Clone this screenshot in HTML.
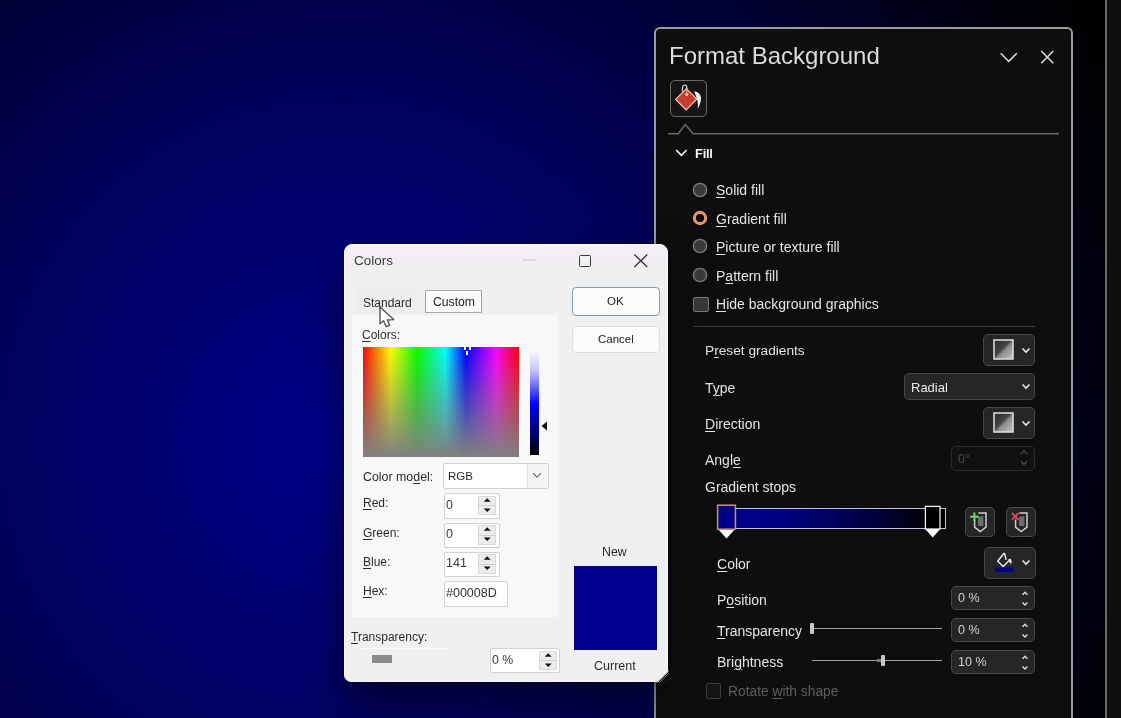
<!DOCTYPE html>
<html><head><meta charset="utf-8"><style>
html,body{margin:0;padding:0;}
body{width:1121px;height:718px;overflow:hidden;position:relative;font-family:"Liberation Sans", sans-serif;
background:#000;}
.bg{position:absolute;left:0;top:0;width:1106px;height:718px;
background:radial-gradient(circle 860px at 340px 440px,#00008d 0%,#00005c 40%,#000000 100%);}
.a{position:absolute;}
.t{position:absolute;white-space:nowrap;line-height:1;will-change:transform;}
u{text-decoration:underline;text-decoration-thickness:1px;text-underline-offset:2px;}
</style></head><body>
<div class="bg"></div>
<div class="a" style="left:1107px;top:0px;width:14px;height:718px;background:#0f0f0f"></div>
<div class="a" style="left:1105px;top:0px;width:2px;height:718px;background:#6a6a6a"></div>
<div class="a" style="left:654px;top:27px;width:419px;height:700px;background:#0e0e0e;border:2px solid #9c9c9c;border-radius:6px 6px 0 0;box-sizing:border-box"></div>
<div class="t" style="left:669px;top:43.98px;font-size:24px;color:#dcdcdc;font-weight:400;">Format Background</div>
<svg class="a" style="left:996px;top:48px;" width="26" height="18" viewBox="0 0 26 18"><path d="M4.7 5.2 L12.7 13.4 L20.8 5.2" fill="none" stroke="#e0e0e0" stroke-width="1.5"/></svg>
<svg class="a" style="left:1038px;top:48px;" width="18" height="18" viewBox="0 0 18 18"><path d="M3.3 3 L15.2 15.2 M15.2 3 L3.3 15.2" fill="none" stroke="#e0e0e0" stroke-width="1.5"/></svg>
<div class="a" style="left:670px;top:80px;width:37px;height:37px;background:#151515;border:1.5px solid #6a6a6a;border-radius:5px;box-sizing:border-box"></div>
<svg class="a" style="left:670px;top:80px;" width="37" height="37" viewBox="0 0 37 37">
<path d="M12.2 11.5 L12.6 6.4 Q13.2 5 15.2 5 Q17 5.4 17 9" fill="none" stroke="#ddd" stroke-width="1.2"/>
<path d="M16.4 8.6 L26.8 19 L16.2 30 L5.6 19.4 Z" fill="#c53d2c" stroke="#f3c7b8" stroke-width="1.2"/>
<path d="M16.8 10 L16.8 13" stroke="#ffd2b0" stroke-width="0.8"/>
<circle cx="16.8" cy="14.4" r="1.5" fill="#ffd2b0"/>
<path d="M24.2 11.2 Q30.2 12.2 31 17.5 Q31.2 23 27.6 29 Q28.4 23 27.2 19.6 Z" fill="#eee"/>
</svg>
<svg class="a" style="left:666px;top:120px;" width="395" height="16" viewBox="0 0 395 16"><path d="M2 13.8 L12.3 13.8 L19.2 4.4 L27.2 13.8 L393 13.8" fill="none" stroke="#6a6a6a" stroke-width="1.5"/></svg>
<svg class="a" style="left:672px;top:146px;" width="18" height="14" viewBox="0 0 18 14"><path d="M4.2 4.1 L9.4 9.4 L14.6 4.1" fill="none" stroke="#eee" stroke-width="1.6"/></svg>
<div class="t" style="left:695px;top:147.10px;font-size:13px;color:#f2f2f2;font-weight:700;letter-spacing:-0.3px">Fill</div>
<svg class="a" style="left:692px;top:181.8px;" width="16" height="16" viewBox="0 0 16 16"><circle cx="8" cy="8" r="6.6" fill="#3a3a3a" stroke="#7c7c7c" stroke-width="1.4"/></svg>
<svg class="a" style="left:692px;top:210px;" width="16" height="16" viewBox="0 0 16 16"><circle cx="8" cy="8" r="5.6" fill="#000" stroke="#e39572" stroke-width="3.2"/></svg>
<svg class="a" style="left:692px;top:238.2px;" width="16" height="16" viewBox="0 0 16 16"><circle cx="8" cy="8" r="6.6" fill="#3a3a3a" stroke="#7c7c7c" stroke-width="1.4"/></svg>
<svg class="a" style="left:692px;top:266.5px;" width="16" height="16" viewBox="0 0 16 16"><circle cx="8" cy="8" r="6.6" fill="#3a3a3a" stroke="#7c7c7c" stroke-width="1.4"/></svg>
<div class="t" style="left:715.5px;top:183.15px;font-size:14px;color:#e4e4e4;font-weight:400;"><u>S</u>olid fill</div>
<div class="t" style="left:715.5px;top:212.15px;font-size:14px;color:#e4e4e4;font-weight:400;"><u>G</u>radient fill</div>
<div class="t" style="left:715.5px;top:240.35px;font-size:14px;color:#e4e4e4;font-weight:400;"><u>P</u>icture or texture fill</div>
<div class="t" style="left:715.5px;top:268.85px;font-size:14px;color:#e4e4e4;font-weight:400;">P<u>a</u>ttern fill</div>
<div class="a" style="left:693px;top:296.5px;width:15.5px;height:15.5px;background:#3a3a3a;border:1.4px solid #7c7c7c;border-radius:2px;box-sizing:border-box"></div>
<div class="t" style="left:715.5px;top:297.15px;font-size:14px;color:#e4e4e4;font-weight:400;"><u>H</u>ide background graphics</div>
<div class="a" style="left:693px;top:325.5px;width:342px;height:1.2px;background:#3c3c3c"></div>
<div class="t" style="left:705px;top:344.40px;font-size:13.7px;color:#e4e4e4;font-weight:400;">P<u>r</u>eset gradients</div>
<div class="t" style="left:705px;top:381.15px;font-size:14px;color:#e4e4e4;font-weight:400;">T<u>y</u>pe</div>
<div class="t" style="left:705px;top:417.15px;font-size:14px;color:#e4e4e4;font-weight:400;"><u>D</u>irection</div>
<div class="t" style="left:705px;top:453.35px;font-size:14px;color:#e4e4e4;font-weight:400;">Angl<u>e</u></div>
<div class="t" style="left:705px;top:480.45px;font-size:14px;color:#e4e4e4;font-weight:400;">Gradient stops</div>
<div class="a" style="left:983px;top:334px;width:52px;height:32px;background:#262626;border:1px solid #474747;border-radius:5px;box-sizing:border-box;"></div>
<svg class="a" style="left:993px;top:339px;" width="21" height="21" viewBox="0 0 21 21"><defs><linearGradient id="g" x1="0" y1="0" x2="1" y2="1"><stop offset="0" stop-color="#2a2a2a"/><stop offset="0.45" stop-color="#444"/><stop offset="0.55" stop-color="#8a8a8a"/><stop offset="1" stop-color="#c8c8c8"/></linearGradient></defs>
    <rect x="1" y="1" width="19" height="19" fill="url(#g)" stroke="#d8d8d8" stroke-width="1.6"/></svg>
<svg class="a" style="left:1020.5px;top:346.5px;" width="10" height="7" viewBox="0 0 10 7"><path d="M1.5 1.5 L5 5 L8.5 1.5" fill="none" stroke="#e8e8e8" stroke-width="1.6"/></svg>
<div class="a" style="left:904px;top:373px;width:131px;height:26.5px;background:#262626;border:1px solid #474747;border-radius:5px;box-sizing:border-box;"></div>
<div class="t" style="left:911.3px;top:381.30px;font-size:13px;color:#e8e8e8;font-weight:400;">Radial</div>
<svg class="a" style="left:1021px;top:382.5px;" width="10" height="7" viewBox="0 0 10 7"><path d="M1.5 1.5 L5 5 L8.5 1.5" fill="none" stroke="#e8e8e8" stroke-width="1.6"/></svg>
<div class="a" style="left:983px;top:407px;width:52px;height:32px;background:#262626;border:1px solid #474747;border-radius:5px;box-sizing:border-box;"></div>
<svg class="a" style="left:993px;top:412px;" width="21" height="21" viewBox="0 0 21 21"><defs><linearGradient id="g" x1="0" y1="0" x2="1" y2="1"><stop offset="0" stop-color="#2a2a2a"/><stop offset="0.45" stop-color="#444"/><stop offset="0.55" stop-color="#8a8a8a"/><stop offset="1" stop-color="#c8c8c8"/></linearGradient></defs>
    <rect x="1" y="1" width="19" height="19" fill="url(#g)" stroke="#d8d8d8" stroke-width="1.6"/></svg>
<svg class="a" style="left:1020.5px;top:419.5px;" width="10" height="7" viewBox="0 0 10 7"><path d="M1.5 1.5 L5 5 L8.5 1.5" fill="none" stroke="#e8e8e8" stroke-width="1.6"/></svg>
<div class="a" style="left:951px;top:445.5px;width:84px;height:25px;background:#111;border:1px solid #2c2c2c;border-radius:5px;box-sizing:border-box"></div>
<div class="t" style="left:957.5px;top:452.84px;font-size:12px;color:#4e4e4e;font-weight:400;">0°</div>
<svg class="a" style="left:1019px;top:449px;" width="10" height="18" viewBox="0 0 10 18"><path d="M2 5 L5 2 L8 5 M2 12.5 L5 15.5 L8 12.5" fill="none" stroke="#4a4a4a" stroke-width="1.3"/></svg>
<div class="a" style="left:733px;top:508px;width:213px;height:21px;background:linear-gradient(to right,#00008d 0%,#000080 25%,#000045 62%,#000000 96%);border:1.6px solid #c4bee0;box-sizing:border-box;border-left:none"></div>
<svg class="a" style="left:715px;top:503px;" width="24" height="37" viewBox="0 0 24 37"><path d="M2.9 26 L11.5 35.4 L20.1 26 Z" fill="#fff"/><rect x="2.6" y="2.2" width="17.8" height="24" fill="#00008d" stroke="#c98b6c" stroke-width="1.6"/></svg>
<svg class="a" style="left:923px;top:504px;" width="20" height="35" viewBox="0 0 20 35"><path d="M2.2 25 L9.7 33.6 L17.2 25 Z" fill="#fff"/><rect x="2.4" y="2.4" width="14.6" height="22.6" fill="#000" stroke="#eee" stroke-width="1.3"/></svg>
<div class="a" style="left:964.5px;top:506.5px;width:30px;height:30.5px;background:#252525;border:1px solid #4a4a4a;border-radius:5px;box-sizing:border-box"></div>
<svg class="a" style="left:964.5px;top:506.5px;" width="30" height="31" viewBox="0 0 30 31"><path d="M13.4 6 L21 6 L21 20.2 L15.2 24.6 L9.6 20.2 L9.6 12.5" fill="none" stroke="#cfcfcf" stroke-width="1.5"/>
    <path d="M13 10 L18.4 9 L18.4 19 L13 19 Z" fill="#6e6e6e"/><path d="M9.4 5.4 L9.4 14 M5 9.7 L13.8 9.7" stroke="#6fd36f" stroke-width="2"/></svg>
<div class="a" style="left:1005.5px;top:506.5px;width:30px;height:30.5px;background:#252525;border:1px solid #4a4a4a;border-radius:5px;box-sizing:border-box"></div>
<svg class="a" style="left:1005.5px;top:506.5px;" width="30" height="31" viewBox="0 0 30 31"><path d="M13.4 6 L21 6 L21 20.2 L15.2 24.6 L9.6 20.2 L9.6 12.5" fill="none" stroke="#cfcfcf" stroke-width="1.5"/>
    <path d="M13 10 L18.4 9 L18.4 19 L13 19 Z" fill="#6e6e6e"/><path d="M5.8 6 L12.6 12.8 M12.6 6 L5.8 12.8" stroke="#d24a63" stroke-width="1.9"/></svg>
<div class="t" style="left:717px;top:557.35px;font-size:14px;color:#e4e4e4;font-weight:400;"><u>C</u>olor</div>
<div class="a" style="left:983.5px;top:546.5px;width:52px;height:32px;background:#262626;border:1px solid #474747;border-radius:5px;box-sizing:border-box;"></div>
<svg class="a" style="left:983.5px;top:546.5px;" width="52" height="32" viewBox="0 0 52 32"><path d="M22.1 12.8 L20.9 7.4 Q20.4 5.8 19.2 7.3 L13.7 14.2 L19.2 19.5 L24.9 13.7" fill="none" stroke="#e6e6e6" stroke-width="1.5" stroke-linejoin="round"/>
<path d="M24.3 12.3 Q27.3 10.8 27.6 14 Q27.6 16 27 17.5 Q26 15 24.5 14.2 Z" fill="#e6e6e6"/>
<rect x="11.2" y="20.6" width="18.3" height="4.4" fill="#00008d"/></svg>
<svg class="a" style="left:1020.5px;top:558.5px;" width="10" height="7" viewBox="0 0 10 7"><path d="M1.5 1.5 L5 5 L8.5 1.5" fill="none" stroke="#e8e8e8" stroke-width="1.6"/></svg>
<div class="t" style="left:717px;top:592.75px;font-size:14px;color:#e4e4e4;font-weight:400;">P<u>o</u>sition</div>
<div class="a" style="left:951px;top:586px;width:84px;height:24px;background:#262626;border:1px solid #474747;border-radius:5px;box-sizing:border-box;"></div>
<div class="t" style="left:958px;top:592.12px;font-size:12.5px;color:#d2d2d2;font-weight:400;">0 %</div>
<svg class="a" style="left:1019px;top:588px;" width="12" height="20" viewBox="0 0 12 20"><path d="M3.5 6.8 L6 4.2 L8.5 6.8 M3.5 14.5 L6 17.1 L8.5 14.5" fill="none" stroke="#d8d8d8" stroke-width="1.4"/></svg>
<div class="t" style="left:717px;top:623.55px;font-size:14px;color:#e4e4e4;font-weight:400;"><u>T</u>ransparency</div>
<div class="a" style="left:951px;top:617.5px;width:84px;height:24px;background:#262626;border:1px solid #474747;border-radius:5px;box-sizing:border-box;"></div>
<div class="t" style="left:958px;top:623.62px;font-size:12.5px;color:#d2d2d2;font-weight:400;">0 %</div>
<svg class="a" style="left:1019px;top:619.5px;" width="12" height="20" viewBox="0 0 12 20"><path d="M3.5 6.8 L6 4.2 L8.5 6.8 M3.5 14.5 L6 17.1 L8.5 14.5" fill="none" stroke="#d8d8d8" stroke-width="1.4"/></svg>
<div class="a" style="left:812px;top:627.5px;width:130px;height:1.7px;background:#9e9e9e"></div>
<div class="a" style="left:810px;top:623px;width:4px;height:11px;background:#c8c8c8;border-radius:1px"></div>
<div class="t" style="left:717px;top:654.95px;font-size:14px;color:#e4e4e4;font-weight:400;">Bri<u>g</u>htness</div>
<div class="a" style="left:951px;top:649.5px;width:84px;height:24px;background:#262626;border:1px solid #474747;border-radius:5px;box-sizing:border-box;"></div>
<div class="t" style="left:958px;top:655.62px;font-size:12.5px;color:#d2d2d2;font-weight:400;">10 %</div>
<svg class="a" style="left:1019px;top:651.5px;" width="12" height="20" viewBox="0 0 12 20"><path d="M3.5 6.8 L6 4.2 L8.5 6.8 M3.5 14.5 L6 17.1 L8.5 14.5" fill="none" stroke="#d8d8d8" stroke-width="1.4"/></svg>
<div class="a" style="left:812px;top:659.5px;width:130px;height:1.7px;background:#9e9e9e"></div>
<div class="a" style="left:877px;top:658.5px;width:5px;height:3.5px;background:#7a7a7a"></div>
<div class="a" style="left:881px;top:655px;width:4px;height:11px;background:#c8c8c8;border-radius:1px"></div>
<div class="a" style="left:705.5px;top:683px;width:15.5px;height:15.5px;background:#161616;border:1.4px solid #3e3e3e;border-radius:2px;box-sizing:border-box"></div>
<div class="t" style="left:727.7px;top:685.32px;font-size:13.8px;color:#5e5e5e;font-weight:400;">Rotate <u>w</u>ith shape</div>
<div class="a" style="left:344px;top:244px;width:324px;height:438px;background:#f0f0f0;border-radius:8px 8px 0 7px;border:1.5px solid #f9f9ff;box-sizing:border-box;box-shadow: 0 2px 8px rgba(0,0,0,0.3), 0 26px 48px rgba(0,0,0,0.5);overflow:hidden">
<div class="a" style="left:0;top:0;width:321px;height:36px;background:linear-gradient(#f3eff4,#f1eef2 70%,#f0f0f0)"></div>
</div>
<div class="t" style="left:353.7px;top:254.27px;font-size:13.5px;color:#3c3c3c;font-weight:400;">Colors</div>
<div class="a" style="left:523px;top:259.2px;width:13px;height:1.6px;background:#dcdadc"></div>
<div class="a" style="left:578.5px;top:254.7px;width:12.2px;height:12.2px;border:1.4px solid #383838;border-radius:1.5px;box-sizing:border-box"></div>
<svg class="a" style="left:632px;top:252px;" width="18" height="18" viewBox="0 0 18 18"><path d="M2.3 2.4 L15.3 15 M15.3 2.4 L2.3 15" stroke="#383838" stroke-width="1.4"/></svg>
<div class="a" style="left:356px;top:287px;width:66px;height:28px;background:#eeeeee"></div>
<div class="t" style="left:362.6px;top:296.64px;font-size:12px;color:#2a2a2a;font-weight:400;">Standard</div>
<div class="a" style="left:424.6px;top:290.4px;width:57.6px;height:22.2px;background:#fafafa;border:1px solid #a8a8a8;box-sizing:border-box"></div>
<div class="t" style="left:432.5px;top:296.07px;font-size:12.2px;color:#222;font-weight:400;">Custom</div>
<div class="a" style="left:352px;top:314.5px;width:206px;height:302px;background:#f8f8f8"></div>
<div class="a" style="left:571.5px;top:287.2px;width:88.5px;height:28.5px;background:#fcfcfc;border:1.6px solid #7d9db7;border-radius:4px;box-sizing:border-box"></div>
<div class="t" style="left:607px;top:296.27px;font-size:11.5px;color:#222;font-weight:400;">OK</div>
<div class="a" style="left:572px;top:326px;width:87.5px;height:27px;background:#fcfcfc;border:1px solid #dcdcdc;border-radius:4px;box-sizing:border-box"></div>
<div class="t" style="left:597.8px;top:334.27px;font-size:11.5px;color:#222;font-weight:400;">Cancel</div>
<div class="t" style="left:362.3px;top:329.24px;font-size:12px;color:#2c2c2c;font-weight:400;"><u>C</u>olors:</div>
<div class="a" style="left:363px;top:347px;width:155.5px;height:110px;background:linear-gradient(to bottom,rgba(128,128,128,0),rgba(128,128,128,1)),linear-gradient(to right,#f00 0%,#ff0 17.8%,#0f0 34.8%,#0ff 53%,#00f 66%,#f0f 85.4%,#f00 100%)"></div>
<div class="a" style="left:463.5px;top:347px;width:2px;height:3px;background:#fff"></div>
<div class="a" style="left:468.5px;top:347px;width:2px;height:3px;background:#fff"></div>
<div class="a" style="left:465.6px;top:351px;width:2.2px;height:4px;background:#fff"></div>
<div class="a" style="left:529.7px;top:352.7px;width:9.3px;height:102.7px;background:linear-gradient(to bottom,#f4f4ff 0%,#c0c0ff 18%,#0000ff 50%,#000080 75%,#000 100%)"></div>
<svg class="a" style="left:540px;top:421px;" width="8" height="10" viewBox="0 0 8 10"><path d="M7 0.5 L1.5 5 L7 9.5 Z" fill="#111"/></svg>
<div class="t" style="left:362.5px;top:470.80px;font-size:12.4px;color:#2c2c2c;font-weight:400;">Color mo<u>d</u>el:</div>
<div class="a" style="left:443.3px;top:462.6px;width:105.4px;height:26.2px;background:#fdfdfd;border:1.3px solid #d2d2d2;border-radius:2px;box-sizing:border-box"></div>
<div class="a" style="left:527.2px;top:463.8px;width:20.3px;height:23.8px;background:#f4f4f4;border-left:1px solid #e2e2e2"></div>
<svg class="a" style="left:531px;top:470px;" width="12" height="10" viewBox="0 0 12 10"><path d="M2 3.2 L6 7.2 L10 3.2" fill="none" stroke="#6a6a6a" stroke-width="1.1"/></svg>
<div class="t" style="left:448.2px;top:470.87px;font-size:11.5px;color:#2c2c2c;font-weight:400;">RGB</div>
<div class="t" style="left:362.5px;top:497.34px;font-size:12px;color:#2c2c2c;font-weight:400;"><u>R</u>ed:</div>
<div class="a" style="left:443.6px;top:493.3px;width:56px;height:25.3px;background:#fff;border:1.4px solid #d2d2d2;border-radius:2px;box-sizing:border-box"></div>
<div class="t" style="left:446px;top:499.02px;font-size:12.5px;color:#383838;font-weight:400;">0</div>
<div class="a" style="left:478.3px;top:495.8px;width:18.2px;height:19.7px;background:#ececec;border:1px solid #dadada;box-sizing:border-box"></div>
<div class="a" style="left:478.3px;top:505.3px;width:18.2px;height:1px;background:#d0d0d0"></div>
<svg class="a" style="left:478.3px;top:495.8px;" width="18" height="20" viewBox="0 0 18 20"><path d="M5.7 5.8 L9.2 2.3 L12.7 5.8 Z M5.7 12.4 L9.2 16 L12.7 12.4 Z" fill="#111"/></svg>
<div class="t" style="left:362.5px;top:526.54px;font-size:12px;color:#2c2c2c;font-weight:400;"><u>G</u>reen:</div>
<div class="a" style="left:443.6px;top:522.5px;width:56px;height:25.3px;background:#fff;border:1.4px solid #d2d2d2;border-radius:2px;box-sizing:border-box"></div>
<div class="t" style="left:446px;top:528.22px;font-size:12.5px;color:#383838;font-weight:400;">0</div>
<div class="a" style="left:478.3px;top:525px;width:18.2px;height:19.7px;background:#ececec;border:1px solid #dadada;box-sizing:border-box"></div>
<div class="a" style="left:478.3px;top:534.5px;width:18.2px;height:1px;background:#d0d0d0"></div>
<svg class="a" style="left:478.3px;top:525px;" width="18" height="20" viewBox="0 0 18 20"><path d="M5.7 5.8 L9.2 2.3 L12.7 5.8 Z M5.7 12.4 L9.2 16 L12.7 12.4 Z" fill="#111"/></svg>
<div class="t" style="left:362.5px;top:555.74px;font-size:12px;color:#2c2c2c;font-weight:400;"><u>B</u>lue:</div>
<div class="a" style="left:443.6px;top:551.7px;width:56px;height:25.3px;background:#fff;border:1.4px solid #d2d2d2;border-radius:2px;box-sizing:border-box"></div>
<div class="t" style="left:446px;top:557.42px;font-size:12.5px;color:#383838;font-weight:400;">141</div>
<div class="a" style="left:478.3px;top:554.2px;width:18.2px;height:19.7px;background:#ececec;border:1px solid #dadada;box-sizing:border-box"></div>
<div class="a" style="left:478.3px;top:563.7px;width:18.2px;height:1px;background:#d0d0d0"></div>
<svg class="a" style="left:478.3px;top:554.2px;" width="18" height="20" viewBox="0 0 18 20"><path d="M5.7 5.8 L9.2 2.3 L12.7 5.8 Z M5.7 12.4 L9.2 16 L12.7 12.4 Z" fill="#111"/></svg>
<div class="t" style="left:362.5px;top:585.24px;font-size:12px;color:#2c2c2c;font-weight:400;"><u>H</u>ex:</div>
<div class="a" style="left:443.6px;top:581px;width:64px;height:25.6px;background:#fff;border:1.4px solid #d2d2d2;border-radius:2px;box-sizing:border-box"></div>
<div class="t" style="left:446px;top:587.42px;font-size:12.5px;color:#333;font-weight:400;">#00008D</div>
<div class="t" style="left:351px;top:631.24px;font-size:12px;color:#2c2c2c;font-weight:400;"><u>T</u>ransparency:</div>
<div class="a" style="left:357px;top:648px;width:95px;height:1px;background:#f8f8f8"></div>
<div class="a" style="left:371.5px;top:655px;width:20.5px;height:8px;background:#8c8c8c"></div>
<div class="a" style="left:490.3px;top:648.3px;width:70px;height:25px;background:#fff;border:1.4px solid #d2d2d2;border-radius:2px;box-sizing:border-box"></div>
<div class="t" style="left:492.4px;top:653.89px;font-size:12.3px;color:#383838;font-weight:400;">0 %</div>
<div class="a" style="left:539.3px;top:650.5px;width:18.2px;height:19.7px;background:#ececec;border:1px solid #dadada;box-sizing:border-box"></div>
<div class="a" style="left:539.3px;top:660.0px;width:18.2px;height:1px;background:#d0d0d0"></div>
<svg class="a" style="left:539.3px;top:650.5px;" width="18" height="20" viewBox="0 0 18 20"><path d="M5.7 5.8 L9.2 2.3 L12.7 5.8 Z M5.7 12.4 L9.2 16 L12.7 12.4 Z" fill="#111"/></svg>
<div class="t" style="left:602px;top:546.29px;font-size:12.3px;color:#2c2c2c;font-weight:400;">New</div>
<div class="a" style="left:573.8px;top:566.1px;width:83.5px;height:83.5px;background:#00008d"></div>
<div class="t" style="left:593.6px;top:659.92px;font-size:12.5px;color:#2c2c2c;font-weight:400;">Current</div>
<svg class="a" style="left:654px;top:668px;" width="16" height="16" viewBox="0 0 16 16"><path d="M15 3 L15 16 L2 16 Z" fill="#0e0e0e"/><path d="M2.6 14.4 L14.4 2.6" stroke="#d8d8d8" stroke-width="1.3"/><path d="M5.5 14.5 L14.5 5.5" stroke="#777" stroke-width="1"/></svg>
<svg class="a" style="left:377px;top:304px;" width="20" height="25" viewBox="0 0 20 25"><path d="M3 3 L3 19.7 L6.6 16.8 L9.2 22.6 L12.6 21.3 L10.4 16 L16.7 15.6 Z" fill="#fff" stroke="#555" stroke-width="1.4" stroke-linejoin="round"/></svg>
</body></html>
